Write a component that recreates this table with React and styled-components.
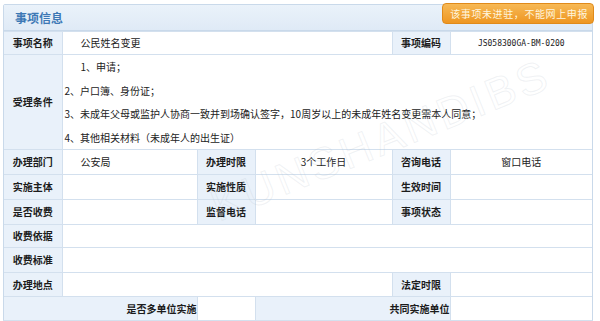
import styled, { createGlobalStyle } from "styled-components";

const GlobalStyle = createGlobalStyle`
  html, body {
    margin: 0;
    padding: 0;
    background: #ffffff;
  }
  body {
    font-family: "Noto Sans CJK SC", "Liberation Sans", sans-serif;
    font-size: 10px;
    color: #222;
  }
`;

const Page = styled.div`
  width: 600px;
  height: 321px;
  padding: 4px 7px 0 3px;
  box-sizing: border-box;
  position: relative;
  overflow: hidden;
`;

const Panel = styled.div`
  border: 1px solid #c9d9ea;
  border-radius: 2px;
  background: #ffffff;
`;

const Header = styled.div`
  height: 25px;
  display: flex;
  align-items: center;
  justify-content: space-between;
  background: linear-gradient(#eaf2fa, #dfeaf6);
  border-bottom: 1px solid #c9d9ea;
  position: relative;
`;

const Title = styled.div`
  padding-left: 11px;
  font-size: 12px;
  font-weight: bold;
  color: #3d78b5;
`;

const Badge = styled.div`
  position: absolute;
  right: -2px;
  top: -2px;
  height: 19px;
  padding: 0 5px 0 7px;
  display: flex;
  align-items: center;
  border-radius: 4px;
  background: linear-gradient(#f7b955, #ee9622);
  border: 1px solid #e08a1a;
  color: #fff6df;
  font-size: 10px;
  letter-spacing: 0.6px;
`;

const Table = styled.table`
  width: 100%;
  border-collapse: collapse;
  table-layout: fixed;
`;

const Row = styled.tr`
  height: ${({ h }) => h || 25}px;
`;

const Label = styled.td`
  background: #e9f1fa;
  border: 1px solid #d3e0ee;
  font-weight: bold;
  font-size: 10px;
  line-height: 14px;
  color: #1c1c1c;
  text-align: ${({ align }) => align || "center"};
  padding: 0 ${({ align }) => (align === "right" ? "0" : "2px")};
  white-space: nowrap;
  &:first-child {
    border-left: none;
  }
`;

const Value = styled.td`
  border: 1px solid #d3e0ee;
  font-size: 10px;
  line-height: 14px;
  color: #222;
  text-align: ${({ center }) => (center ? "center" : "left")};
  padding: 0 ${({ center }) => (center ? "0" : "18px")};
  white-space: nowrap;
  &:last-child {
    border-right: none;
  }
`;

const Code = styled.span`
  font-family: "DejaVu Sans Mono", "Liberation Mono", monospace;
  font-size: 8px;
`;

const Conditions = styled.td`
  border: 1px solid #d3e0ee;
  border-right: none;
  padding: 0 0 0 2px;
  vertical-align: top;
`;

const Line = styled.div`
  height: 23.5px;
  line-height: 23.5px;
  padding-left: ${({ indent }) => (indent ? "16px" : "0")};
  font-size: 10px;
  white-space: nowrap;
`;

const Watermark = styled.div`
  position: absolute;
  left: 200px;
  top: 115px;
  transform: rotate(-22deg);
  font-family: "Liberation Sans", sans-serif;
  font-size: 44px;
  letter-spacing: 4px;
  color: transparent;
  -webkit-text-stroke: 1px rgba(185, 195, 205, 0.22);
  pointer-events: none;
`;

export default function App() {
  return (
    <>
      <GlobalStyle />
      <Page>
        <Panel>
          <Header>
            <Title>事项信息</Title>
            <Badge>该事项未进驻，不能网上申报</Badge>
          </Header>
          <Table>
            <colgroup>
              <col style={{ width: 58 }} />
              <col style={{ width: 135 }} />
              <col style={{ width: 58 }} />
              <col style={{ width: 137 }} />
              <col style={{ width: 58 }} />
              <col />
            </colgroup>
            <tbody>
              <Row h={23}>
                <Label>事项名称</Label>
                <Value colSpan={3}>公民姓名变更</Value>
                <Label>事项编码</Label>
                <Value center>
                  <Code>JS058300GA-BM-0200</Code>
                </Value>
              </Row>
              <Row h={95}>
                <Label>受理条件</Label>
                <Conditions colSpan={5}>
                  <Line indent>1、申请；</Line>
                  <Line>2、户口簿、身份证；</Line>
                  <Line>
                    3、未成年父母或监护人协商一致并到场确认签字，10周岁以上的未成年姓名变更需本人同意；
                  </Line>
                  <Line>4、其他相关材料（未成年人的出生证）</Line>
                </Conditions>
              </Row>
              <Row>
                <Label>办理部门</Label>
                <Value>公安局</Value>
                <Label>办理时限</Label>
                <Value center>3个工作日</Value>
                <Label>咨询电话</Label>
                <Value center>窗口电话</Value>
              </Row>
              <Row>
                <Label>实施主体</Label>
                <Value />
                <Label>实施性质</Label>
                <Value />
                <Label>生效时间</Label>
                <Value />
              </Row>
              <Row>
                <Label>是否收费</Label>
                <Value />
                <Label>监督电话</Label>
                <Value />
                <Label>事项状态</Label>
                <Value />
              </Row>
              <Row h={23}>
                <Label>收费依据</Label>
                <Value colSpan={5} />
              </Row>
              <Row h={25}>
                <Label>收费标准</Label>
                <Value colSpan={5} />
              </Row>
              <Row h={24}>
                <Label>办理地点</Label>
                <Value colSpan={3} />
                <Label>法定时限</Label>
                <Value />
              </Row>
              <Row h={24}>
                <Label colSpan={2} align="right">
                  是否多单位实施
                </Label>
                <Value />
                <Label colSpan={2} align="right">
                  共同实施单位
                </Label>
                <Value />
              </Row>
            </tbody>
          </Table>
        </Panel>
        <Watermark>KUNSHANDIBS</Watermark>
      </Page>
    </>
  );
}
